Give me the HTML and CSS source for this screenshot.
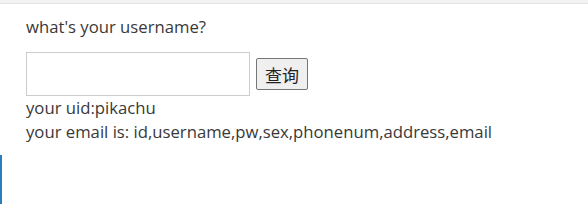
FILE: index.html
```html
<!doctype html>
<html lang="en">
<head>
  <meta charset="utf-8">
  <title>sqli</title>
  <link rel="stylesheet" href="styles.css">
</head>
<body>
  <div class="topbar"></div>
  <div class="main">
    <div class="content">
      <p class="question">what's your username?</p>
      <form class="search">
        <input type="text" class="name-input">
        <button type="button" class="submit">查询</button>
      </form>
      <p class="result">your uid:pikachu<br>your email is: id,username,pw,sex,phonenum,address,email</p>
    </div>
    <div class="sidebar"></div>
  </div>
</body>
</html>
```

FILE: styles.css
```css
html, body {
  margin: 0;
  padding: 0;
}
body {
  font-family: 'Open Sans', 'Noto Sans', sans-serif;
  font-size: 16.7px;
  color: #393939;
  background: #fff;
}
.topbar {
  height: 3px;
  background: #f2f2f2;
  border-bottom: 1px solid #e3e3e3;
}
.main {
  padding-top: 12px;
}
.content {
  padding: 0 26px;
}
.question {
  margin: 0;
  line-height: 22px;
}
.search {
  margin: 14px 0 0;
  display: flex;
  align-items: center;
}
.name-input {
  box-sizing: border-box;
  height: 44px;
  width: 224px;
  border: 1px solid #ccc;
  padding: 4px;
  margin: 0;
  font-size: 14px;
}
.submit {
  margin-left: 6px;
  height: 32px;
  padding: 0 8px;
  font-family: 'Noto Sans CJK SC', sans-serif;
  font-size: 17px;
  color: #222;
  background: #efefef;
  border: 1px solid #767676;
  border-radius: 2px;
}
.result {
  margin: 0;
  line-height: 24px;
}
.sidebar {
  margin-top: 11px;
  width: 2px;
  height: 49px;
  background: #2b7dbc;
}
```
